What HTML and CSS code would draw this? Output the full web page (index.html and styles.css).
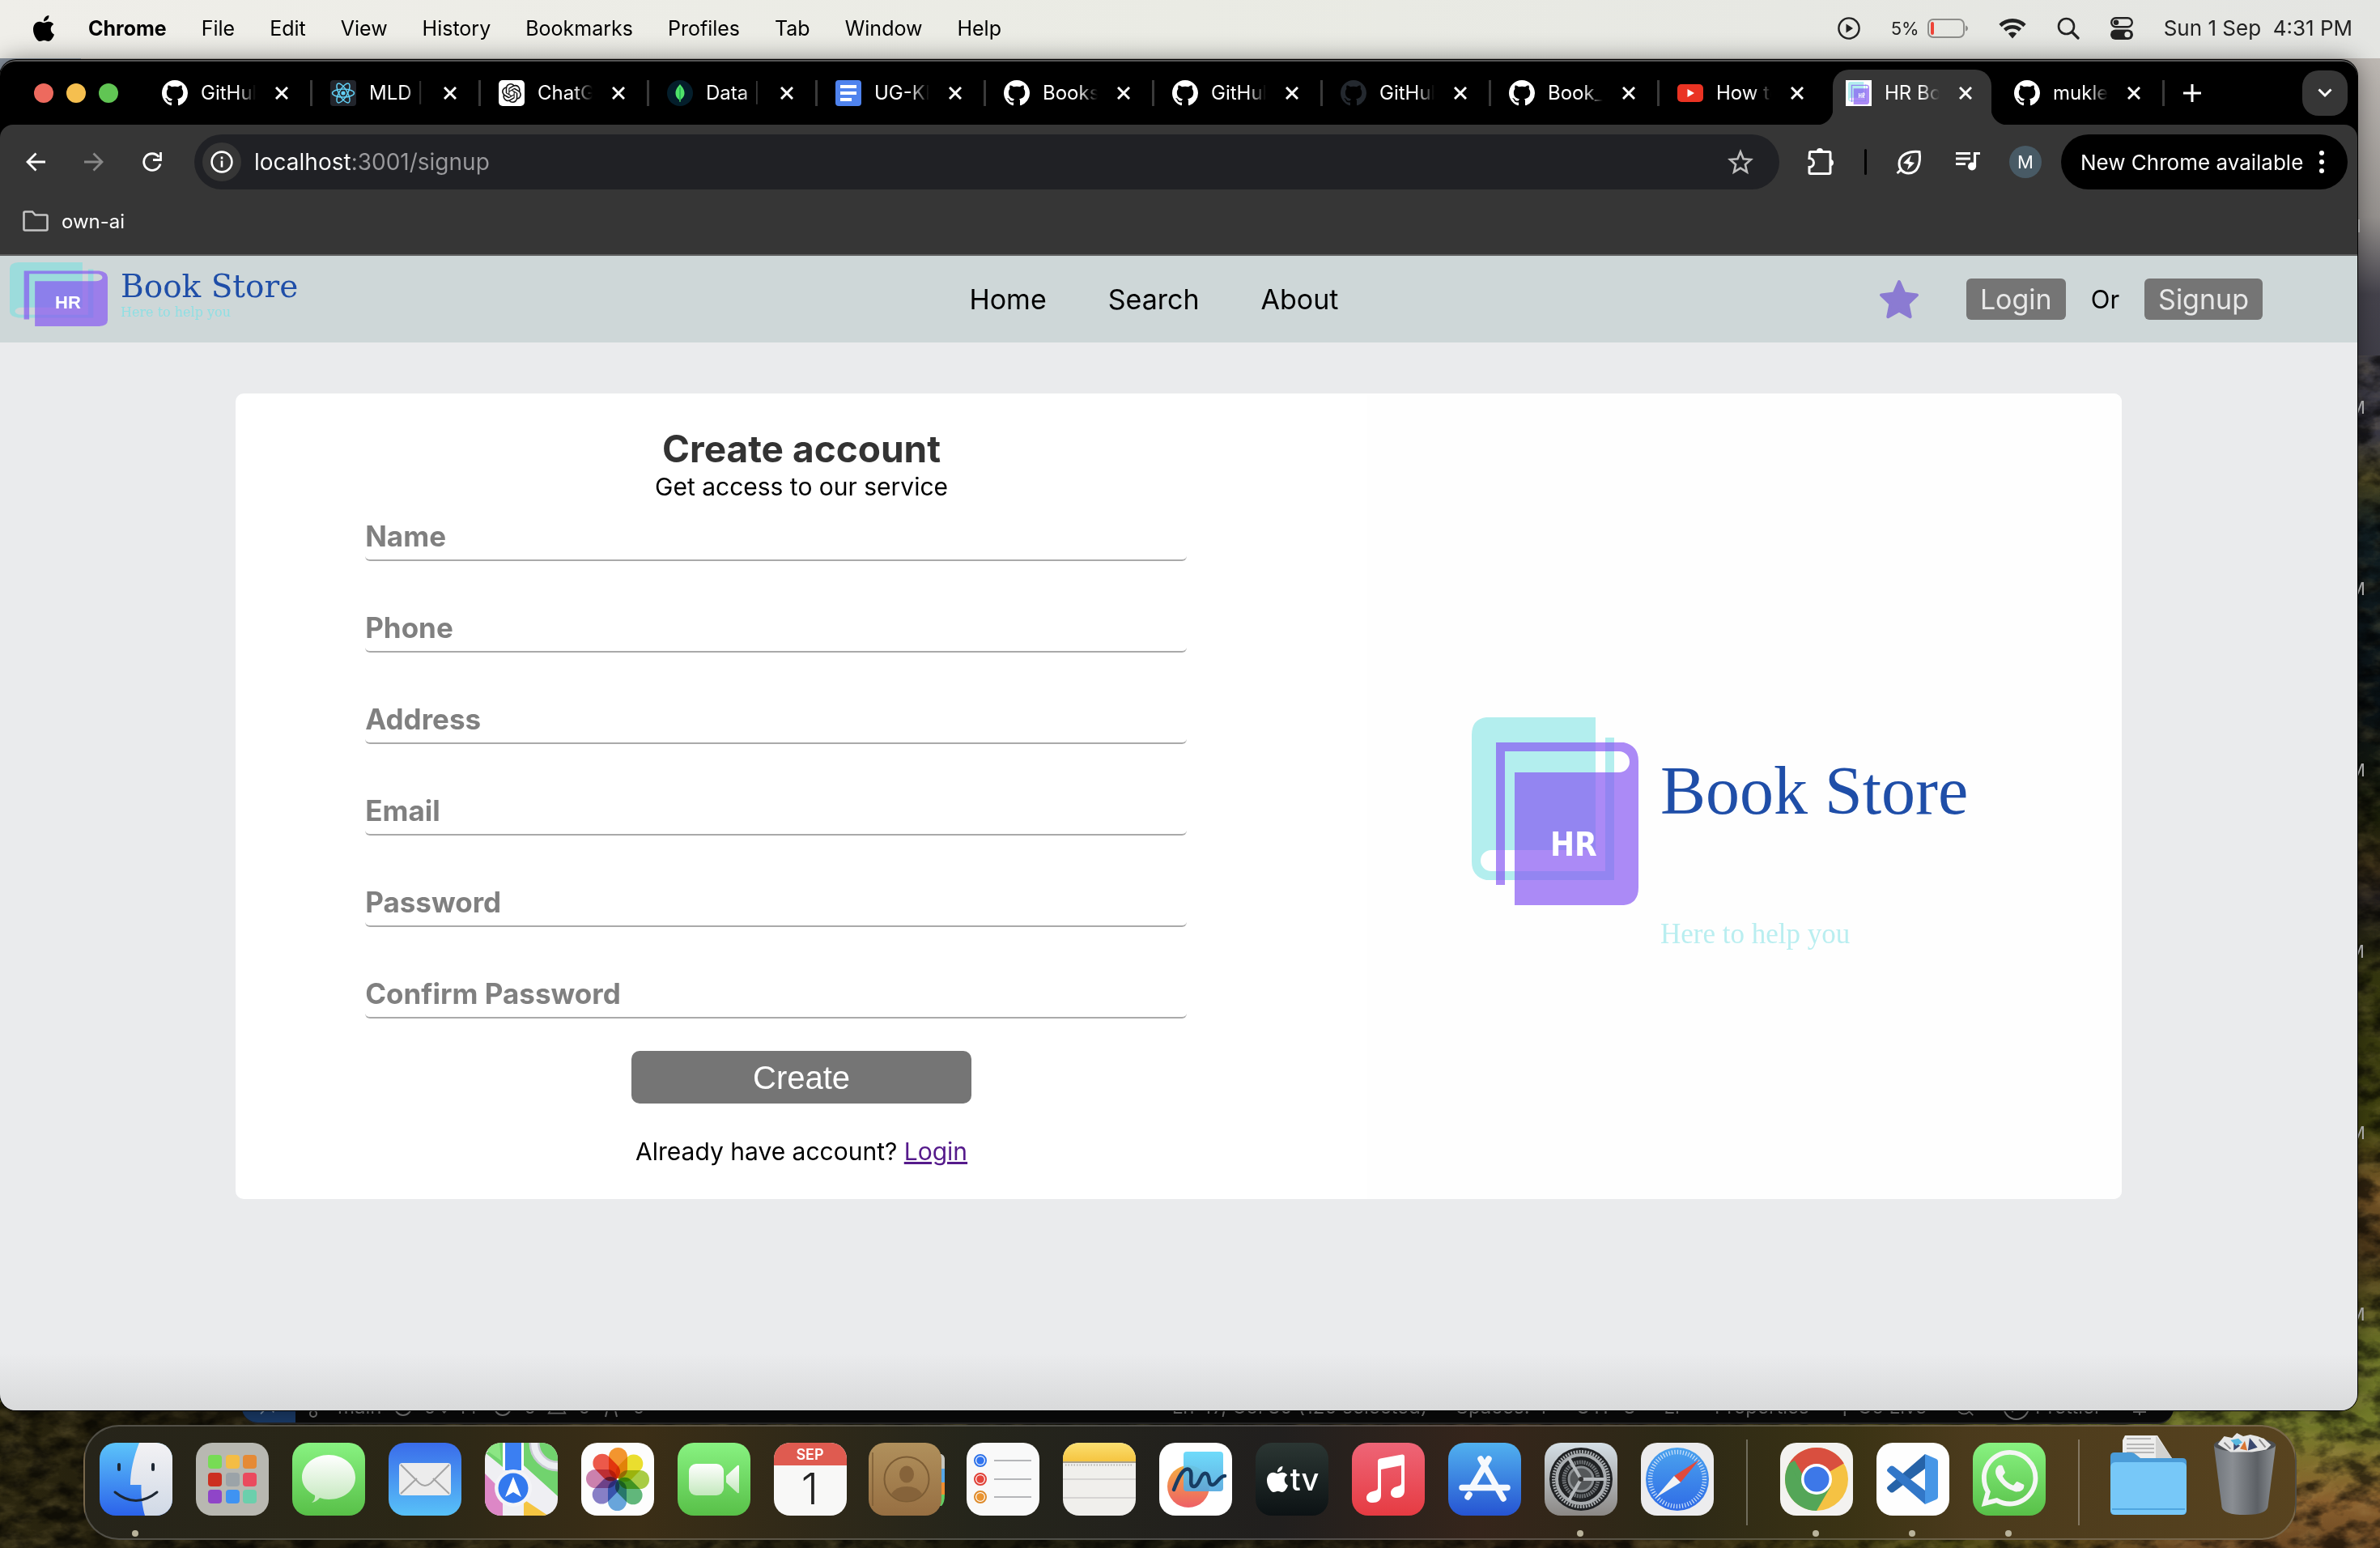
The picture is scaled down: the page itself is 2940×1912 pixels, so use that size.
FILE: index.html
```html
<!DOCTYPE html>
<html lang="en">
<head>
<meta charset="utf-8">
<title>HR Book Store</title>
<link rel="stylesheet" href="styles.css">
</head>
<body>
<svg class="defs" aria-hidden="true">
  <symbol id="github" viewBox="0 0 16 16"><path d="M8 0C3.58 0 0 3.58 0 8c0 3.54 2.29 6.53 5.47 7.59.4.07.55-.17.55-.38 0-.19-.01-.82-.01-1.49-2.01.37-2.53-.49-2.69-.94-.09-.23-.48-.94-.82-1.13-.28-.15-.68-.52-.01-.53.63-.01 1.08.58 1.23.82.72 1.21 1.87.87 2.33.66.07-.52.28-.87.51-1.07-1.78-.2-3.64-.89-3.64-3.95 0-.87.31-1.59.82-2.15-.08-.2-.36-1.02.08-2.12 0 0 .67-.21 2.2.82.64-.18 1.32-.27 2-.27.68 0 1.36.09 2 .27 1.53-1.04 2.2-.82 2.2-.82.44 1.1.16 1.92.08 2.12.51.56.82 1.27.82 2.15 0 3.07-1.87 3.75-3.65 3.95.29.25.54.73.54 1.48 0 1.07-.01 1.93-.01 2.2 0 .21.15.46.55.38A8.013 8.013 0 0016 8c0-4.42-3.58-8-8-8z"/></symbol>
  <symbol id="apple" viewBox="0 0 24 24"><path d="M12.152 6.896c-.948 0-2.415-1.078-3.96-1.04-2.04.027-3.91 1.183-4.961 3.014-2.117 3.675-.546 9.103 1.519 12.09 1.013 1.454 2.208 3.09 3.792 3.039 1.52-.065 2.09-.987 3.935-.987 1.831 0 2.35.987 3.96.948 1.637-.026 2.676-1.48 3.676-2.948 1.156-1.688 1.636-3.325 1.662-3.415-.039-.013-3.182-1.221-3.22-4.857-.026-3.04 2.48-4.494 2.597-4.559-1.429-2.09-3.623-2.324-4.39-2.376-2-.156-3.675 1.09-4.61 1.09zM15.53 3.83c.843-1.012 1.4-2.427 1.245-3.83-1.207.052-2.662.805-3.532 1.818-.78.896-1.454 2.338-1.273 3.714 1.338.104 2.715-.688 3.559-1.701"/></symbol>
  <symbol id="cross" viewBox="0 0 16 16"><path d="M1 1l14 14M15 1L1 15" stroke="currentColor" stroke-width="3" fill="none"/></symbol>
  <symbol id="book" viewBox="0 0 206 232" preserveAspectRatio="none">
    <path fill="#73dfe0" fill-opacity=".54" d="M18 0H153V164H24a13 13 0 0 0 0 26H165V25H176V201H18Q0 197 0 178V22Q0 2 18 0Z"/>
    <path fill="#8556f2" fill-opacity=".69" transform="rotate(180 103 116)" d="M18 0H153V164H24a13 13 0 0 0 0 26H165V25H176V201H18Q0 197 0 178V22Q0 2 18 0Z"/>
  </symbol>
</svg>

<svg class="wallpaper-grain" aria-hidden="true">
  <filter id="grain"><feTurbulence type="fractalNoise" baseFrequency=".03 .06" numOctaves="4" seed="4"/><feColorMatrix values="0 0 0 0 .55  0 0 0 0 .42  0 0 0 0 .15  2.4 0 0 0 -1.05"/></filter>
  <filter id="shade"><feTurbulence type="fractalNoise" baseFrequency=".03 .05" numOctaves="4" seed="9"/><feColorMatrix values="0 0 0 0 0  0 0 0 0 0  0 0 0 0 0  3 0 0 0 -1.2"/></filter>
  <rect width="100%" height="70%" y="30%" filter="url(#grain)" opacity=".2"/>
  <rect width="100%" height="70%" y="30%" filter="url(#shade)" opacity=".6"/>
</svg>

<ul class="desktop-files">
  <li>4.31 PM</li><li>4.30 PM</li><li>4.29 PM</li><li>4.28 PM</li><li>4.27 PM</li><li>4.26 PM</li><li>4.25 PM</li>
</ul>

<div class="editor-status">
  <svg class="remote" viewBox="0 0 66 44"><path d="M22 14l8 8-8 8M40 10l-9 9 9 9" fill="none" stroke="#7f93ab" stroke-width="2"/></svg>
  <span class="status-left"><svg viewBox="0 0 24 30"><circle cx="8" cy="24" r="4"/><circle cx="18" cy="8" r="4"/><path d="M8 20V8"/></svg><span>main</span><svg viewBox="0 0 24 30"><circle cx="12" cy="16" r="10"/></svg><span>0↓ 1↑</span><svg viewBox="0 0 24 30"><circle cx="12" cy="16" r="10"/></svg><span>0</span><svg viewBox="0 0 28 30"><path d="M14 4L26 25H2Z"/></svg><span>0</span><svg viewBox="0 0 24 30"><path d="M12 4v12M5 28l2-8h10l2 8"/></svg><span>0</span></span>
  <span class="status-right"><span>Ln 47, Col 80 (120 selected)</span><span>Spaces: 4</span><span>UTF-8</span><span>LF</span><span>Properties</span><span>⚲ Go Live</span><svg viewBox="0 0 28 30"><circle cx="13" cy="16" r="10"/><path d="M2 4l24 24"/></svg><span>⊘ Prettier</span><svg viewBox="0 0 24 30"><path d="M4 22h16M12 4v22M7 20V12a5 5 0 0 1 10 0v8"/></svg></span>
</div>

<header class="menubar">
  <nav class="menus">
    <svg class="apple"><use href="#apple"/></svg>
    <b>Chrome</b><span>File</span><span>Edit</span><span>View</span><span>History</span><span>Bookmarks</span><span>Profiles</span><span>Tab</span><span>Window</span><span>Help</span>
  </nav>
  <div class="extras">
    <svg width="28" height="28" viewBox="0 0 28 28"><circle cx="14" cy="14" r="12.6" fill="none" stroke="#222" stroke-width="2.4"/><path d="M10.500 8.500v11l8.500-5.500z" fill="#222"/></svg>
    <span class="battery">5%<svg width="50" height="24" viewBox="0 0 50 24"><rect x="1" y="1" width="44" height="22" rx="6" fill="none" stroke="#8e8e8b" stroke-width="2"/><path d="M47 8.500q3 1 3 3.500t-3 3.500z" fill="#8e8e8b"/><rect x="4" y="4" width="4" height="16" rx="2" fill="#ee4438"/></svg></span>
    <svg width="34" height="26" viewBox="0 0 34 26"><path d="M17 25.500l5.200-6a8 8 0 0 0-10.400 0z" fill="#222"/><path d="M2 9.500a21.500 21.500 0 0 1 30 0M7.500 15a13.800 13.800 0 0 1 19 0" fill="none" stroke="#222" stroke-width="4.600"/></svg>
    <svg width="28" height="28" viewBox="0 0 28 28"><circle cx="11.500" cy="11.500" r="9.500" fill="none" stroke="#222" stroke-width="2.600"/><path d="M18.500 18.500l7.500 7.500" stroke="#222" stroke-width="3.200" stroke-linecap="round"/></svg>
    <svg width="28" height="28" viewBox="0 0 28 28"><rect x="1.200" y="1.200" width="25.600" height="11" rx="5.500" fill="none" stroke="#222" stroke-width="2.400"/><circle cx="7" cy="6.700" r="3.300" fill="#222"/><rect y="15.500" width="28" height="12.500" rx="6.250" fill="#222"/><circle cx="21" cy="21.700" r="3.600" fill="#e6e7e3"/></svg>
    <time>Sun 1 Sep&nbsp; 4:31 PM</time>
  </div>
</header>

<main class="window">
  <div class="tabstrip">
    <div class="lights"><i class="red"></i><i class="amber"></i><i class="green"></i></div>
    <ul class="tabs">
      <li class="tab"><svg class="fav"><use href="#github"/></svg><span>GitHub</span><button aria-label="Close tab"><svg><use href="#cross"/></svg></button></li>
      <li class="tab"><svg class="fav" viewBox="0 0 32 32"><rect width="32" height="32" rx="4" fill="#22252c"/><g fill="none" stroke="#62d0f5" stroke-width="1.500"><ellipse cx="16" cy="16" rx="13.500" ry="5"/><ellipse cx="16" cy="16" rx="13.500" ry="5" transform="rotate(60 16 16)"/><ellipse cx="16" cy="16" rx="13.500" ry="5" transform="rotate(120 16 16)"/></g><circle cx="16" cy="16" r="2.600" fill="#62d0f5"/></svg><span>MLD | Ho</span><button aria-label="Close tab"><svg><use href="#cross"/></svg></button></li>
      <li class="tab"><svg class="fav" viewBox="0 0 32 32"><rect width="32" height="32" rx="5" fill="#fff"/><path transform="translate(4 4)" fill="#111" d="M22.2819 9.8211a5.9847 5.9847 0 0 0-.5157-4.9108 6.0462 6.0462 0 0 0-6.5098-2.9A6.0651 6.0651 0 0 0 4.9807 4.1818a5.9847 5.9847 0 0 0-3.9977 2.9 6.0462 6.0462 0 0 0 .7427 7.0966 5.98 5.98 0 0 0 .511 4.9107 6.051 6.051 0 0 0 6.5146 2.9001A5.9847 5.9847 0 0 0 13.2599 24a6.0557 6.0557 0 0 0 5.7718-4.2058 5.9894 5.9894 0 0 0 3.9977-2.9001 6.0557 6.0557 0 0 0-.7475-7.0729zm-9.022 12.6081a4.4755 4.4755 0 0 1-2.8764-1.0408l.1419-.0804 4.7783-2.7582a.7948.7948 0 0 0 .3927-.6813v-6.7369l2.02 1.1686a.071.071 0 0 1 .038.052v5.5826a4.504 4.504 0 0 1-4.4945 4.4944zm-9.6607-4.1254a4.4708 4.4708 0 0 1-.5346-3.0137l.142.0852 4.783 2.7582a.7712.7712 0 0 0 .7806 0l5.8428-3.3685v2.3324a.0804.0804 0 0 1-.0332.0615L9.74 19.9502a4.4992 4.4992 0 0 1-6.1408-1.6464zM2.3408 7.8956a4.485 4.485 0 0 1 2.3655-1.9728V11.6a.7664.7664 0 0 0 .3879.6765l5.8144 3.3543-2.0201 1.1685a.0757.0757 0 0 1-.071 0l-4.8303-2.7865A4.504 4.504 0 0 1 2.3408 7.872zm16.5963 3.8558L13.1038 8.364 15.1192 7.2a.0757.0757 0 0 1 .071 0l4.8303 2.7913a4.4944 4.4944 0 0 1-.6765 8.1042v-5.6772a.79.79 0 0 0-.407-.667zm2.0107-3.0231l-.142-.0852-4.7735-2.7818a.7759.7759 0 0 0-.7854 0L9.409 9.2297V6.8974a.0662.0662 0 0 1 .0284-.0615l4.8303-2.7866a4.4992 4.4992 0 0 1 6.6802 4.66zM8.3065 12.863l-2.02-1.1638a.0804.0804 0 0 1-.038-.0567V6.0742a4.4992 4.4992 0 0 1 7.3757-3.4537l-.142.0805L8.704 5.459a.7948.7948 0 0 0-.3927.6813zm1.0976-2.3654l2.602-1.4998 2.6069 1.4998v2.9994l-2.5974 1.4997-2.6067-1.4997Z"/></svg><span>ChatGPT</span><button aria-label="Close tab"><svg><use href="#cross"/></svg></button></li>
      <li class="tab"><svg class="fav" viewBox="0 0 32 32"><circle cx="16" cy="16" r="16" fill="#041e2b"/><path d="M16 5c2 3 5.500 5.500 5.500 11 0 4.500-3 7-4.800 8.300L16.500 27h-1l-.3-2.700C13 23 10.500 20.500 10.500 16 10.500 10.500 14 8 16 5z" fill="#4fe36a"/><path d="M16 9v15" stroke="#12a54a" stroke-width="1.200"/></svg><span>Data | Mo</span><button aria-label="Close tab"><svg><use href="#cross"/></svg></button></li>
      <li class="tab"><svg class="fav" viewBox="0 0 32 32"><rect width="32" height="32" rx="4" fill="#4f83ee"/><path d="M6 8h20M6 16h20M6 24h14" stroke="#fff" stroke-width="4"/></svg><span>UG-KRN</span><button aria-label="Close tab"><svg><use href="#cross"/></svg></button></li>
      <li class="tab"><svg class="fav"><use href="#github"/></svg><span>Booksto</span><button aria-label="Close tab"><svg><use href="#cross"/></svg></button></li>
      <li class="tab"><svg class="fav"><use href="#github"/></svg><span>GitHub</span><button aria-label="Close tab"><svg><use href="#cross"/></svg></button></li>
      <li class="tab"><svg class="fav dim"><use href="#github"/></svg><span>GitHub</span><button aria-label="Close tab"><svg><use href="#cross"/></svg></button></li>
      <li class="tab"><svg class="fav"><use href="#github"/></svg><span>Book_St</span><button aria-label="Close tab"><svg><use href="#cross"/></svg></button></li>
      <li class="tab plain"><svg class="fav" viewBox="0 0 32 32"><rect y="5" width="32" height="22" rx="5" fill="#ea3323"/><path d="M12.500 11v10l8.500-5z" fill="#fff"/></svg><span>How to</span><button aria-label="Close tab"><svg><use href="#cross"/></svg></button></li>
      <li class="tab plain active"><svg class="fav" viewBox="0 0 32 32"><rect width="32" height="32" fill="#fff"/><use href="#book" x="3" y="2" width="26" height="28"/><path d="M16.500 16v6M19 16v6M16.500 19H19M21 22v-6h2v3h-2l2 3" stroke="#fff" fill="none"/></svg><span>HR Book</span><button aria-label="Close tab"><svg><use href="#cross"/></svg></button></li>
      <li class="tab"><svg class="fav"><use href="#github"/></svg><span>mukles</span><button aria-label="Close tab"><svg><use href="#cross"/></svg></button></li>
    </ul>
    <button class="newtab" aria-label="New tab"><svg width="22" height="22" viewBox="0 0 22 22"><path d="M11 0v22M0 11h22" stroke="#fff" stroke-width="3"/></svg></button>
    <button class="tabsearch" aria-label="Search tabs"><svg width="18" height="12" viewBox="0 0 18 12"><path d="M1.500 1.500L9 9l7.500-7.500" fill="none" stroke="#fff" stroke-width="3"/></svg></button>
  </div>

  <div class="toolbar">
    <button aria-label="Back"><svg viewBox="0 0 24 24"><path d="M24 12H2M12.500 1.500L2 12l10.500 10.500" fill="none" stroke="#fff" stroke-width="2.800"/></svg></button>
    <button aria-label="Forward"><svg viewBox="0 0 24 24"><path d="M0 12h22M11.500 1.500L22 12 11.500 22.500" fill="none" stroke="#888" stroke-width="2.800"/></svg></button>
    <button aria-label="Reload"><svg viewBox="0 0 24 24"><path d="M22 14.500A10.300 10.300 0 1 1 20.200 5.800M22.500 0v9.500H13" fill="none" stroke="#fff" stroke-width="2.800"/></svg></button>
    <div class="omnibox">
      <span class="info"><svg width="28" height="28" viewBox="0 0 28 28"><circle cx="14" cy="14" r="12.400" fill="none" stroke="#fff" stroke-width="2.600"/><path d="M14 12.500v8M14 7.500v3" stroke="#fff" stroke-width="2.600"/></svg></span>
      <input type="text" aria-label="Address" value="localhost:3001/signup">
      <svg width="32" height="32" viewBox="0 0 32 32"><path d="M16 3.500l3.600 8.700 9.400.8-7.100 6.200 2.100 9.300L16 23.600l-8 4.900 2.100-9.300L3 13l9.400-.8z" fill="none" stroke="#bdbdbd" stroke-width="2.600"/></svg>
    </div>
    <div class="actions">
      <svg width="38" height="36" viewBox="0 0 38 36"><path d="M6.500 6.500q0-1 1-1h23q1.500 0 1.500 1.500v24q0 1.500-1.500 1.500h-23q-1.500 0-1.500-1.500v-6.500a5.500 5.500 0 0 0 0-11z" fill="none" stroke="#fff" stroke-width="3"/><path d="M15 5a4 4 0 0 1 8 0zM32 15a4 4 0 0 1 0 8z" fill="#fff"/></svg>
      <i class="divider"></i>
      <svg width="36" height="36" viewBox="0 0 36 36"><path d="M29 5.500C16 4 4 9 4 20c0 7 5 12 11.500 12C27 32 31 20 29 5.500zM1.500 32l5.500-5" fill="none" stroke="#fff" stroke-width="3"/><path d="M19 9.500L9 19.500l7 1.500-2 7 9-9-6.500-1.500z" fill="#fff"/></svg>
      <svg width="32" height="32" viewBox="0 0 32 32"><path d="M2 5.500h18M2 12h18M2 18.500h12" stroke="#fff" stroke-width="3.200"/><circle cx="22" cy="21.500" r="5" fill="#fff"/><path d="M25.500 22V5.500H32" fill="none" stroke="#fff" stroke-width="3.200"/></svg>
      <span class="avatar">M</span>
    </div>
    <button class="update">New Chrome available<svg width="6" height="28" viewBox="0 0 6 28"><circle cx="3" cy="3" r="3"/><circle cx="3" cy="14" r="3"/><circle cx="3" cy="25" r="3"/></svg></button>
  </div>
  <div class="bookmarks"><svg width="32" height="26" viewBox="0 0 32 26"><path d="M1.500 3q0-1.500 1.500-1.500h9l3.500 4H29q1.500 0 1.500 1.500v16q0 1.500-1.500 1.500H3q-1.500 0-1.500-1.500z" fill="none" stroke="#c4c4c4" stroke-width="2.600"/></svg><span>own-ai</span></div>

  <section class="site">
    <header class="site-nav">
      <div class="brand">
        <svg class="brand-mark" viewBox="0 0 206 232" preserveAspectRatio="none"><use href="#book" width="206" height="232"/></svg>
        <b class="brand-hr">HR</b>
        <div class="brand-name"><span>Book Store</span><small>Here to help you</small></div>
      </div>
      <nav class="links"><a href="#home">Home</a><a href="#search">Search</a><a href="#about">About</a></nav>
      <div class="account">
        <svg width="50" height="50" viewBox="0 0 50 50"><path d="M25 3l6.300 14.600L47 19.400 35.500 30.200l3.200 16L25 38.400 11.300 46.200l3.200-16L3 19.400l15.700-1.800z" fill="#8b7bd2" stroke="#8b7bd2" stroke-width="4" stroke-linejoin="round"/></svg>
        <button class="pill">Login</button><span>Or</span><button class="pill">Signup</button>
      </div>
    </header>
    <div class="card">
      <form class="signup">
        <h1>Create account</h1>
        <p class="sub">Get access to our service</p>
        <div class="fields">
          <div class="field"><label for="name">Name</label><input id="name" type="text"></div>
          <div class="field"><label for="phone">Phone</label><input id="phone" type="tel"></div>
          <div class="field"><label for="address">Address</label><input id="address" type="text"></div>
          <div class="field"><label for="email">Email</label><input id="email" type="email"></div>
          <div class="field"><label for="password">Password</label><input id="password" type="password"></div>
          <div class="field"><label for="confirm">Confirm Password</label><input id="confirm" type="password"></div>
        </div>
        <button class="create" type="button">Create</button>
        <p class="already">Already have account? <a href="#login">Login</a></p>
      </form>
      <div class="poster">
        <div class="poster-mark"><svg viewBox="0 0 206 232"><use href="#book" width="206" height="232"/></svg><b>HR</b></div>
        <div class="poster-text"><strong>Book Store</strong><em>Here to help you</em></div>
      </div>
    </div>
  </section>
</main>

<footer class="dock">
  <div class="slot running"><svg class="app" viewBox="0 0 90 90"><defs><linearGradient id="fa" x2="0" y2="1"><stop stop-color="#5cc4fa"/><stop offset="1" stop-color="#2b62ea"/></linearGradient><linearGradient id="fb" x2="0" y2="1"><stop stop-color="#f3f2f4"/><stop offset="1" stop-color="#d0d9e6"/></linearGradient></defs><rect width="90" height="90" fill="url(#fa)"/><path d="M49 0C42 18 38 35 38 52H51.500C51 66 53 80 56 90H90V0Z" fill="url(#fb)"/><g fill="none" stroke="#1d2733" stroke-width="4" stroke-linecap="round"><path d="M24 27v6M66 27v6"/><path d="M19 61Q45 82 71 61" stroke-width="3"/></g></svg></div>
  <div class="slot"><svg class="app" viewBox="0 0 90 90"><rect width="90" height="90" fill="#b8b8b1"/><g><rect x="15" y="15" width="17" height="17" rx="4" fill="#77dc55"/><rect x="37" y="15" width="17" height="17" rx="4" fill="#f4bd45"/><rect x="58" y="15" width="17" height="17" rx="4" fill="#e58a35"/><rect x="15" y="37" width="17" height="17" rx="4" fill="#cc3020"/><rect x="37" y="37" width="17" height="17" rx="4" fill="#9ba3a8"/><rect x="58" y="37" width="17" height="17" rx="4" fill="#ea4a5e"/><rect x="15" y="58" width="17" height="17" rx="4" fill="#8f45c8"/><rect x="37" y="58" width="17" height="17" rx="4" fill="#3f93f2"/><rect x="58" y="58" width="17" height="17" rx="4" fill="#6bcfac"/></g></svg></div>
  <div class="slot"><svg class="app" viewBox="0 0 90 90"><defs><linearGradient id="gr" x2="0" y2="1"><stop stop-color="#88f281"/><stop offset="1" stop-color="#58c048"/></linearGradient><linearGradient id="wb" x2="0" y2="1"><stop stop-color="#fff"/><stop offset="1" stop-color="#c4e8bd"/></linearGradient></defs><rect width="90" height="90" fill="url(#gr)"/><path d="M45 15c18 0 33 12 33 28S63 70 45 70q-6 0-11-2-4 5-10 6 5-4 4-9C18 60 12 52 12 43 12 27 27 15 45 15z" fill="url(#wb)"/></svg></div>
  <div class="slot"><svg class="app" viewBox="0 0 90 90"><defs><linearGradient id="ml" x2="0" y2="1"><stop stop-color="#3a6cea"/><stop offset="1" stop-color="#58c1f8"/></linearGradient></defs><rect width="90" height="90" fill="url(#ml)"/><rect x="13" y="25" width="64" height="40" rx="4" fill="#ececec"/><path d="M15 63l20-19M75 63L55 44M15 27l23 23q7 6 14 0l23-23" fill="none" stroke="#a5a5a5" stroke-width="2"/></svg></div>
  <div class="slot"><svg class="app" viewBox="0 0 90 90"><rect width="90" height="90" fill="#efeff3"/><path d="M0 14L18 0H22V30L0 12zM48 0H90V66L48 28z" fill="#71d36e"/><path d="M0 0h18l2 22L0 8z" fill="#8ce684"/><path d="M0 38l22 22v30H0z" fill="#dd87c6"/><path d="M48 90V70l30 20z" fill="#f5c542"/><circle cx="90" cy="0" r="29" fill="none" stroke="#c9cbd4" stroke-width="13"/><circle cx="90" cy="0" r="29" fill="none" stroke="#eceef2" stroke-width="8"/><path d="M22 0v34h26V0z" fill="#fff"/><path d="M25 0v34h20V0z" fill="#3b7ff2"/><circle cx="35" cy="56" r="23" fill="#f4f4f7"/><circle cx="35" cy="56" r="18.500" fill="#3379ee"/><path d="M35 42l10 25-10-6-10 6z" fill="#fff"/></svg></div>
  <div class="slot"><svg class="app photos" viewBox="0 0 90 90"><rect width="90" height="90" fill="#fdfdfd"/><rect x="34" y="6" width="23" height="38" rx="11.500" fill="#f5962f"/><rect x="34" y="6" width="23" height="38" rx="11.500" fill="#ece02e" transform="rotate(45 45 45)"/><rect x="34" y="6" width="23" height="38" rx="11.500" fill="#a9ce45" transform="rotate(90 45 45)"/><rect x="34" y="6" width="23" height="38" rx="11.500" fill="#62b97c" transform="rotate(135 45 45)"/><rect x="34" y="6" width="23" height="38" rx="11.500" fill="#69a6dd" transform="rotate(180 45 45)"/><rect x="34" y="6" width="23" height="38" rx="11.500" fill="#8880c8" transform="rotate(225 45 45)"/><rect x="34" y="6" width="23" height="38" rx="11.500" fill="#cd82af" transform="rotate(270 45 45)"/><rect x="34" y="6" width="23" height="38" rx="11.500" fill="#ee5a4a" transform="rotate(315 45 45)"/></svg></div>
  <div class="slot"><svg class="app" viewBox="0 0 90 90"><rect width="90" height="90" fill="url(#gr)"/><rect x="14" y="26" width="43" height="39" rx="9" fill="url(#wb)"/><path d="M60 41L74 28q2-1 2 1v32q0 2-2 1L60 49z" fill="url(#wb)"/></svg></div>
  <div class="slot"><div class="app calendar"><span>SEP</span><b>1</b></div></div>
  <div class="slot"><svg class="app contacts" viewBox="0 0 94 90"><path d="M84 14h6q4 2 4 6v12H84z" fill="#c6c6c0"/><path d="M84 32h10v17H84z" fill="#56a7e8"/><path d="M84 49h10v15H84z" fill="#f08d32"/><path d="M84 64h10q0 10-4 14h-6z" fill="#62cd62"/><defs><linearGradient id="ct" x2="0" y2="1"><stop stop-color="#b0905c"/><stop offset="1" stop-color="#976f42"/></linearGradient></defs><rect width="90" height="90" rx="20" fill="url(#ct)"/><path d="M5 12v66" stroke="#7d5c34" stroke-width="1.500"/><circle cx="47" cy="45" r="27.500" fill="none" stroke="#7d5d35" stroke-width="2"/><ellipse cx="47" cy="39" rx="9" ry="10.500" fill="#86633a"/><path d="M28 63q6-9 19-9t19 9q-7 9-19 9t-19-9z" fill="#86633a"/></svg></div>
  <div class="slot"><svg class="app" viewBox="0 0 90 90"><rect width="90" height="90" fill="#f9f9f9"/><g stroke="#9fa0a4" stroke-width="1.600"><path d="M34 22h46M34 45h46M34 67h46"/></g><g fill="#fff" stroke-width="2"><circle cx="17" cy="22" r="7" stroke="#2f73e8"/><circle cx="17" cy="45" r="7" stroke="#df4138"/><circle cx="17" cy="67" r="7" stroke="#de8a2a"/></g><circle cx="17" cy="22" r="4.800" fill="#2f73f0"/><circle cx="17" cy="45" r="4.800" fill="#e5463c"/><circle cx="17" cy="67" r="4.800" fill="#ea9430"/></svg></div>
  <div class="slot"><svg class="app" viewBox="0 0 90 90"><defs><linearGradient id="nt" x2="0" y2="1"><stop stop-color="#fadf71"/><stop offset="1" stop-color="#f6c540"/></linearGradient></defs><rect width="90" height="90" fill="#f0efec"/><rect width="90" height="23" fill="url(#nt)"/><path d="M0 24h90" stroke="#a9a08a" stroke-width="2"/><path d="M3 27.500h84" stroke="#b5b4b0" stroke-width="2" stroke-dasharray="1.500 2"/><path d="M0 45h90M0 68h90" stroke="#cdccca" stroke-width="1.500"/></svg></div>
  <div class="slot"><svg class="app" viewBox="0 0 90 90"><defs><linearGradient id="ff" x2="0" y2="1"><stop stop-color="#f3ad42"/><stop offset="1" stop-color="#ee5f66"/></linearGradient><linearGradient id="fc" x2="0" y2="1"><stop stop-color="#62d8fa"/><stop offset="1" stop-color="#55a8de"/></linearGradient></defs><rect width="90" height="90" fill="#fff"/><circle cx="36" cy="54" r="26" fill="url(#ff)"/><rect x="30" y="11" width="49" height="49" rx="4" fill="url(#fc)" opacity=".92"/><path d="M18 58C24 42 30 30 37 33c6 4-2 21 6 21 7 0 8-19 15-16 6 3 1 14 8 14 5 0 8-11 15-11" fill="none" stroke="#173d63" stroke-width="4.500" stroke-linecap="round"/></svg></div>
  <div class="slot"><div class="app tv"><svg><use href="#apple"/></svg><span>tv</span></div></div>
  <div class="slot"><svg class="app" viewBox="0 0 90 90"><defs><linearGradient id="mu" x2="0" y2="1"><stop stop-color="#ee6577"/><stop offset="1" stop-color="#e63b42"/></linearGradient></defs><rect width="90" height="90" fill="url(#mu)"/><path d="M32 23q0-3 3-3.500l27-5q3-.5 3 2.500v42c0 6-4 9-9 9s-8-2-8-6 3-7 8-8c4-1 5-2 5-5V28L36 33v32c0 6-4 9-10 9-5 0-8-2-8-6s3-7 8-8c5-1 6-2 6-5z" fill="#fff"/></svg></div>
  <div class="slot"><svg class="app" viewBox="0 0 90 90"><defs><linearGradient id="as" x2="0" y2="1"><stop stop-color="#51b1ef"/><stop offset="1" stop-color="#2654d2"/></linearGradient></defs><rect width="90" height="90" fill="url(#as)"/><g stroke="#f6f9fd" stroke-width="7.500" stroke-linecap="round"><path d="M40 20l28 49M50 20L30 54M24 67l2-3M17 55.500h56"/></g></svg></div>
  <div class="slot running"><svg class="app" viewBox="0 0 90 90"><defs><linearGradient id="st" x2="0" y2="1"><stop stop-color="#d5dfe6"/><stop offset="1" stop-color="#8b8885"/></linearGradient></defs><rect width="90" height="90" fill="url(#st)"/><circle cx="45" cy="45" r="39" fill="#202224"/><g fill="none"><circle cx="45" cy="45" r="34" stroke="#a9adb0" stroke-width="4" stroke-dasharray="2 1.500"/><circle cx="45" cy="45" r="30" stroke="#a9adb0" stroke-width="4"/><circle cx="45" cy="45" r="21" stroke="#6f7376" stroke-width="5" stroke-dasharray="2 1"/><circle cx="45" cy="45" r="15" fill="#55585a" stroke="#8b8f92" stroke-width="3"/></g><g stroke="#b5b9bc" stroke-width="4"><path d="M45 45h31M45 45L30 19M45 45L30 71"/></g><circle cx="45" cy="45" r="3" fill="#333"/></svg></div>
  <div class="slot"><svg class="app" viewBox="0 0 90 90"><defs><linearGradient id="sf" x2="0" y2="1"><stop stop-color="#4ba3ee"/><stop offset="1" stop-color="#2f6be6"/></linearGradient></defs><rect width="90" height="90" fill="#ececee"/><circle cx="45" cy="45" r="39" fill="url(#sf)"/><circle cx="45" cy="45" r="33.500" fill="none" stroke="#cfe2f8" stroke-width="5.500" stroke-dasharray="1.200 2.300"/><path d="M72 21L49 49 41 41z" fill="#e04a3d"/><path d="M18 68L41 41l8 8z" fill="#f3f3f4"/></svg></div>
  <i class="dock-rule"></i>
  <div class="slot running"><svg class="app" viewBox="0 0 90 90"><rect width="90" height="90" fill="#f3f2f0"/><circle cx="45" cy="45" r="39" fill="#f5c243"/><path d="M45 45L11.200 25.500A39 39 0 0 1 78.800 25.500z" fill="#d94f3f"/><path d="M11.200 25.500A39 39 0 0 0 45 84L62 54.700 45 45z" fill="#54a658"/><path d="M11.200 25.500L28 54.700 45 45z" fill="#54a658"/><path d="M11.200 25.500L28 50l17-24.500z" fill="#d94f3f"/><path d="M11.200 25.500L28.100 54.700l8 0L18 22z" fill="#54a658"/><circle cx="45" cy="45" r="19" fill="#fff"/><circle cx="45" cy="45" r="15.500" fill="#3d78e8"/></svg></div>
  <div class="slot running"><svg class="app" viewBox="0 0 90 90"><rect width="90" height="90" fill="#fefefe"/><path d="M60 14L14 54q-2 2 0 4l3 3q2 1 4 0L60 32z" fill="#2663a8"/><path d="M60 76L14 36q-2-2 0-4l3-3q2-1 4 0L60 59z" fill="#3277c8"/><path d="M60 14l14 6q2 1 2 3v44q0 2-2 3l-14 6z" fill="#4796e6"/></svg></div>
  <div class="slot running"><svg class="app" viewBox="0 0 90 90"><rect width="90" height="90" fill="url(#gr)"/><path transform="translate(10.500 9) scale(2.920)" fill="#f5f6f5" d="M17.472 14.382c-.297-.149-1.758-.867-2.03-.967-.273-.099-.471-.148-.67.15-.197.297-.767.966-.94 1.164-.173.199-.347.223-.644.075-.297-.15-1.255-.463-2.39-1.475-.883-.788-1.48-1.761-1.653-2.059-.173-.297-.018-.458.13-.606.134-.133.298-.347.446-.52.149-.174.198-.298.298-.497.099-.198.05-.371-.025-.52-.075-.149-.669-1.612-.916-2.207-.242-.579-.487-.5-.669-.51-.173-.008-.371-.01-.57-.01-.198 0-.52.074-.792.372-.272.297-1.04 1.016-1.04 2.479 0 1.462 1.065 2.875 1.213 3.074.149.198 2.096 3.2 5.077 4.487.709.306 1.262.489 1.694.625.712.227 1.36.195 1.871.118.571-.085 1.758-.719 2.006-1.413.248-.694.248-1.289.173-1.413-.074-.124-.272-.198-.57-.347m-5.421 7.403h-.004a9.87 9.87 0 01-5.031-1.378l-.361-.214-3.741.982.998-3.648-.235-.374a9.86 9.86 0 01-1.51-5.26c.001-5.45 4.436-9.884 9.888-9.884 2.64 0 5.122 1.03 6.988 2.898a9.825 9.825 0 012.893 6.994c-.003 5.45-4.437 9.884-9.885 9.884m8.413-18.297A11.815 11.815 0 0012.05 0C5.495 0 .16 5.335.157 11.892c0 2.096.547 4.142 1.588 5.945L.057 24l6.305-1.654a11.882 11.882 0 005.683 1.448h.005c6.554 0 11.89-5.335 11.893-11.893a11.821 11.821 0 00-3.48-8.413Z"/></svg></div>
  <i class="dock-rule"></i>
  <div class="slot"><svg class="item" viewBox="0 0 94 100"><path d="M15 34V8l3-6h40l18 28v8z" fill="#ededec"/><path d="M56 2l20 28H56z" fill="#d2d2d0"/><path d="M20 6h30M20 13h34M20 18h34M20 23h34" stroke="#a5a5a5" stroke-width="1.500"/><path d="M0 28q0-5 5-5h21q3 0 6 3l5 4h52q5 0 5 5v60q0 5-5 5H5q-5 0-5-5z" fill="#4b9cd8"/><rect y="35" width="94" height="65" rx="6" fill="#77c8f8"/><path d="M2 93h90" stroke="#4fa6e0" stroke-width="2"/></svg></div>
  <div class="slot"><svg class="item" viewBox="0 0 80 104"><defs><linearGradient id="tr"><stop stop-color="#70757b"/><stop offset=".3" stop-color="#8a8e93"/><stop offset=".7" stop-color="#5c6065"/><stop offset="1" stop-color="#8d9195"/></linearGradient></defs><path d="M1 15l10 78q2 10 29 10t29-10l10-78z" fill="url(#tr)"/><ellipse cx="40" cy="15" rx="39" ry="9" fill="#4c4f53"/><path d="M6 14L14 4l10 2L30 0l8 4 9-2 9 2 8 3 9 8-6 6-18 3H22z" fill="#e6e6e6"/><path d="M26 10l8 6-8 6zM46 6l10 12-12 4z" fill="#39476e"/><path d="M22 9l10-2 5 5-8 4z" fill="#57b7df"/><path d="M34 20l6-10 3 12z" fill="#d87533"/><path d="M14 12l8 8M58 8l8 10" stroke="#8a8a8a" stroke-width="2"/></svg></div>
</footer>
</body>
</html>
```
FILE: styles.css
```css
* { box-sizing: border-box; }
body {
  margin: 0;
  min-height: 100vh;
  display: flex;
  flex-direction: column;
  position: relative;
  overflow: hidden;
  font-family: Inter, "Liberation Sans", sans-serif;
  color: #000;
  background:
    linear-gradient(90deg, #2b260f, #1d190c 10%, #2f2812 22%, #17170b 48%, #2d2011 66%, #4a4612 82%, transparent 92%) bottom / 100% 180px no-repeat,
    linear-gradient(#8a94a0 0 100px, transparent 100px) left top / 100px 100% no-repeat,
    linear-gradient(#bdb8b3 4%, #96928f 14%, #45434c 19%, #3a3944 28%, #4a4520 31%, #122024 34%, #0a1216 46%, #1c1f0a 53%, #3c3018 56%, #1e1a1a 58%, #34360f 63%, #40420f 73%, #7a5828 77%, #4a3618 81%, #6a7226 87%, #747c2a 92%, #8a602e 97%, #6a4722);
}
button { font: inherit; border: 0; padding: 0; background: none; color: inherit; display: flex; align-items: center; }
ul { list-style: none; margin: 0; padding: 0; }
.defs { position: absolute; width: 0; height: 0; }
.wallpaper-grain { position: absolute; inset: 0; width: 100%; height: 100%; }

/* desktop behind the browser */
.desktop-files {
  position: absolute;
  top: 267px;
  right: 18px;
  color: #c8c8c8;
  font-size: 22px;
  line-height: 24px;
  display: flex;
  flex-direction: column;
  gap: 200px;
}
.editor-status {
  position: absolute;
  left: 299px;
  right: 255px;
  bottom: 153px;
  height: 40px;
  padding-right: 30px;
  background: #0a0a0a;
  border-bottom: 2px solid #262626;
  border-radius: 0 0 20px 20px;
  color: #777;
  font-size: 24px;
  line-height: 32px;
  display: flex;
  overflow: hidden;
}
.editor-status svg { width: 24px; height: 30px; fill: none; stroke: #777; stroke-width: 2; }
.editor-status .remote { width: 66px; height: 40px; background: #1a3a66; }
.status-left { display: flex; gap: 14px; margin-left: 14px; padding-top: 3px; }
.status-right { display: flex; gap: 35px; margin-left: auto; padding-top: 3px; }

/* menu bar */
.menubar {
  position: relative;
  height: 72px;
  display: flex;
  align-items: center;
  justify-content: space-between;
  padding: 0 34px 2px 38px;
  background: linear-gradient(90deg, #efeee9, #eaebe4 50%, #e4e5e2);
  font-size: 25px;
  line-height: 32px;
}
.menus { display: flex; align-items: center; gap: 43px; }
.menus .apple { width: 32px; height: 32px; margin-right: -4px; }
.extras { display: flex; align-items: center; gap: 38px; color: #222; font-size: 26px; }
.battery { display: flex; align-items: center; gap: 10px; font-size: 22px; }

/* browser window */
.window {
  position: relative;
  flex: 1;
  display: flex;
  flex-direction: column;
  margin: 2px 28px 0 0;
  overflow: hidden;
  border-radius: 20px;
  background: #000;
  border-top: 2px solid #555;
  box-shadow: 0 0 0 1px #000, 0 0 30px rgba(0, 0, 0, .45);
}
.tabstrip { height: 78px; display: flex; align-items: center; color: #fff; padding: 0 12px 0 42px; }
.lights { display: flex; gap: 16px; width: 136px; }
.lights i { width: 24px; height: 24px; border-radius: 50%; }
.red { background: #ed6a5e; }
.amber { background: #f5bf4f; }
.green { background: #61c554; }
.tabs { display: flex; height: 78px; font-size: 24px; }
.tab { position: relative; width: 208px; height: 78px; display: flex; align-items: center; padding-left: 22px; }
.tab > * { position: relative; z-index: 1; }
.tab .fav { width: 32px; height: 32px; fill: #fff; margin-right: 16px; }
.tab .dim { fill: #24292f; }
.tab span {
  width: 68px;
  overflow: hidden;
  white-space: nowrap;
  line-height: 32px;
  -webkit-mask-image: linear-gradient(90deg, #000 65%, transparent);
  mask-image: linear-gradient(90deg, #000 65%, transparent);
}
.tab button { margin-left: 24px; }
.tab button svg { width: 16px; height: 16px; }
.tab::before { content: ""; position: absolute; right: 0; top: 23px; width: 3px; height: 32px; background: #3a3a3a; }
.tab.plain::before { display: none; }
.tab.active::before { display: block; inset: 10px 6px 0; width: auto; height: auto; background: #363636; border-radius: 20px 20px 0 0; }
.tab.active::after {
  content: "";
  position: absolute;
  left: -14px;
  right: -14px;
  bottom: 0;
  height: 20px;
  background:
    radial-gradient(circle at 0 0, transparent 20px, #363636 21px) left / 20px 20px no-repeat,
    radial-gradient(circle at 100% 0, transparent 20px, #363636 21px) right / 20px 20px no-repeat;
}
.newtab { margin-left: 23px; }
.tabsearch { margin-left: auto; width: 56px; height: 56px; border-radius: 20px; background: #363636; justify-content: center; }

.toolbar {
  height: 92px;
  display: flex;
  align-items: center;
  gap: 48px;
  padding: 0 12px 0 32px;
  background: #363636;
  border-radius: 16px 16px 0 0;
  color: #fff;
}
.toolbar > button > svg[viewBox="0 0 24 24"] { width: 24px; height: 24px; }
.omnibox {
  flex: 1;
  height: 68px;
  margin-left: -8px;
  display: flex;
  align-items: center;
  padding: 0 32px 0 10px;
  border-radius: 34px;
  background: #202125;
}
.info { width: 48px; height: 48px; border-radius: 50%; background: #363636; display: flex; align-items: center; justify-content: center; }
.omnibox input {
  flex: 1;
  margin: 0 16px;
  border: 0;
  padding: 0;
  outline: 0;
  font: 28px/40px Inter, "Liberation Sans", sans-serif;
  color: transparent;
  background: linear-gradient(90deg, #fff 122px, #9a9a9d 122px);
  -webkit-background-clip: text;
  background-clip: text;
}
.actions { display: flex; align-items: center; gap: 36px; margin: 0 -24px 0 -17px; }
.divider { width: 3px; height: 32px; background: #000; border-radius: 2px; }
.avatar { width: 40px; height: 40px; border-radius: 50%; background: #485a65; font-size: 22px; line-height: 40px; text-align: center; }
.update { height: 68px; width: 354px; padding: 0 29px 0 24px; border-radius: 34px; background: #000; justify-content: space-between; font-size: 26px; white-space: nowrap; }
.update svg { fill: #fff; }
.bookmarks { height: 70px; padding: 0 28px 14px; display: flex; align-items: center; gap: 16px; background: #363636; border-bottom: 2px solid #5e5e5e; color: #fff; font-size: 24px; }

/* book store site */
.site {
  flex: 1;
  background: linear-gradient(rgba(205, 206, 206, 0) calc(100% - 70px), rgba(205, 206, 206, .6)), #eaebed;
}
.site-nav {
  height: 107px;
  display: flex;
  align-items: center;
  justify-content: space-between;
  padding: 0 117px 0 12px;
  background: #ced7d8;
}
.brand { position: relative; width: 518px; margin-bottom: 12px; display: flex; align-items: center; gap: 16px; }
.brand-mark { width: 121px; height: 79px; }
.brand-hr { position: absolute; left: 56px; top: 36px; color: #fff; font: bold 22px/28px "Liberation Sans", sans-serif; }
.brand-name { display: flex; flex-direction: column; font-family: "DejaVu Serif", serif; }
.brand-name span { color: #1f4ea8; font-size: 39px; line-height: 44px; }
.brand-name small { color: #8fdfe3; font-size: 16px; line-height: 20px; }
.links { display: flex; gap: 76px; }
.links a { color: #000; text-decoration: none; }
.account { display: flex; align-items: center; }
.account > svg { margin-right: 58px; }
.account span { margin: 0 31px; font-size: 31px; }
.pill { height: 51px; padding: 0 17px; border-radius: 6px; background: #757575; color: #e8e8e8; }
.links, .pill { font-size: 34px; }

.card { margin: 63px 10% 0; display: flex; background: #fff; border-radius: 10px; overflow: hidden; }
.signup { width: 60%; padding: 42px 0 39px; display: flex; flex-direction: column; align-items: center; }
.signup h1 { margin: 0; color: #333; font-size: 46px; line-height: 52px; }
.sub { margin: 0; font-size: 30px; line-height: 42px; }
.fields { align-self: stretch; margin: 18px 223px 0 160px; display: flex; flex-direction: column; gap: 60px; }
.field { display: grid; }
.field label, .field input { grid-area: 1 / 1; }
.field label { color: #808080; font-size: 35px; font-weight: 700; line-height: 44px; }
.field input { height: 53px; border: 0; padding: 0; outline: 0; background: none; border-bottom: 2px solid #aaa; border-radius: 6px; font-size: 35px; }
.create { width: 420px; height: 65px; margin-top: 40px; border-radius: 10px; background: #757575; color: #fff; justify-content: center; font: 40px/48px "Liberation Sans", sans-serif; }
.already { margin: 39px 0 0; font-size: 30px; line-height: 40px; }
.already a { color: #551a8b; }
.poster { width: 40%; padding: 400px 0 0 129px; display: flex; gap: 27px; background: #fefefe; }
.poster-mark { position: relative; width: 206px; height: 232px; }
.poster-mark svg { width: 206px; height: 232px; }
.poster-mark b { position: absolute; left: 97px; top: 127px; color: #fff; font: bold 40px/60px "Liberation Sans Narrow", "DejaVu Sans Condensed", sans-serif; }
.poster-text { display: flex; flex-direction: column; font-family: "Liberation Serif", serif; white-space: nowrap; }
.poster-text strong { margin-top: 43px; font-weight: 400; font-size: 84px; line-height: 96px; color: #1f4ea8; }
.poster-text em { margin-top: 107px; font-style: normal; font-size: 35px; line-height: 44px; color: #b9eef0; }

/* dock */
.dock {
  position: relative;
  align-self: center;
  height: 142px;
  margin: 18px 0 10px;
  padding: 0 3px;
  display: flex;
  align-items: center;
  border: 2px solid rgba(255, 255, 255, .2);
  border-radius: 44px;
  background: linear-gradient(90deg, #26241a, #2b2716 15%, #3b2e16 25%, #25251b 40%, #211f1e 54%, #35251b 63%, #2d2916 72%, #3b3314 80%, #4a3a1c 85%, #58431f);
}
.slot { position: relative; flex: none; width: 119px; height: 138px; display: flex; justify-content: center; align-items: flex-end; padding-bottom: 28px; }
.running::after { content: ""; position: absolute; left: 55px; bottom: 2px; width: 8px; height: 8px; border-radius: 50%; background: #b9b39b; }
.app { width: 90px; height: 90px; border-radius: 20px; overflow: hidden; }
.contacts { width: 94px; border-radius: 0; }
.photos rect + rect { mix-blend-mode: multiply; }
.item { width: 94px; height: 102px; }
.dock-rule { width: 2px; height: 106px; margin: 0 25px 0 26px; background: rgba(255, 255, 255, .3); }
.calendar { background: #f8f8f7; display: flex; flex-direction: column; text-align: center; }
.calendar span { height: 28px; background: #df5b50; color: #fff; font-size: 18px; font-weight: 600; line-height: 29px; }
.calendar b { color: #222; font-size: 54px; font-weight: 300; line-height: 58px; }
.tv { background: linear-gradient(#2b3633, #0c1214); color: #fff; display: flex; align-items: center; justify-content: center; font-size: 38px; font-weight: 500; line-height: 40px; }
.tv svg { width: 32px; height: 32px; fill: #fff; }
```
